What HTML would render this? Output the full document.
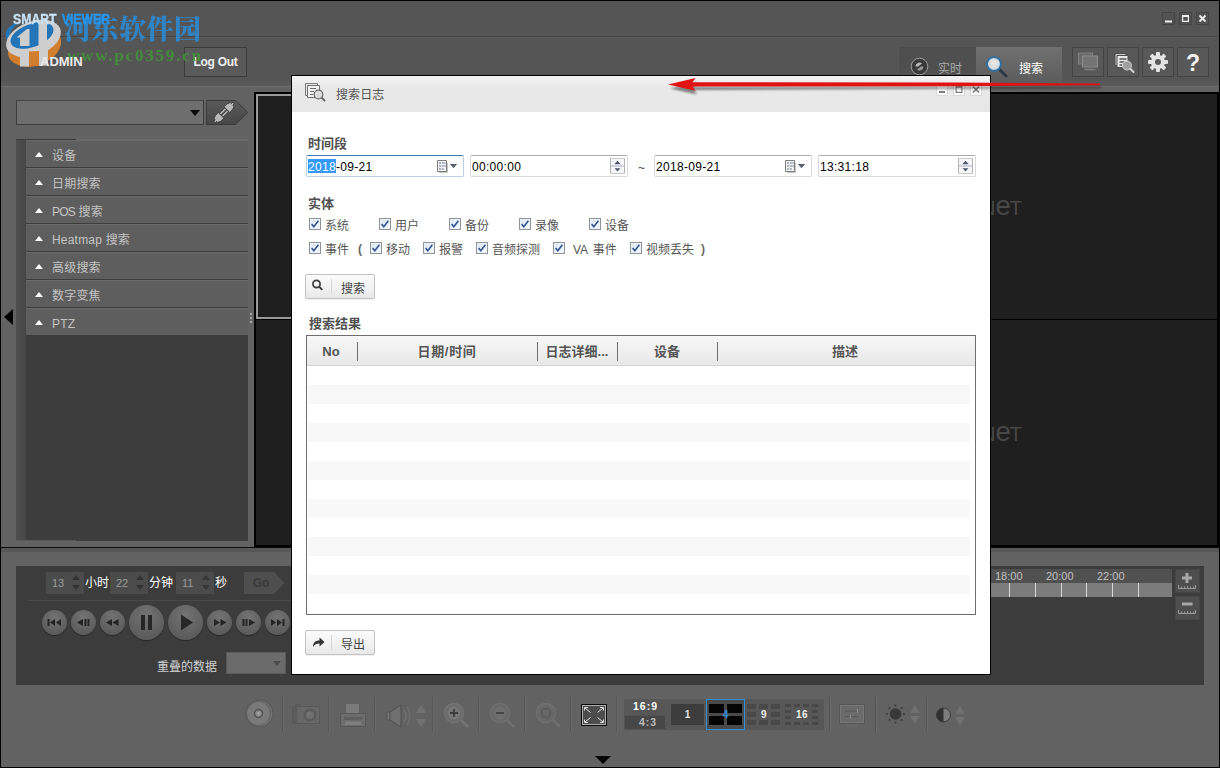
<!DOCTYPE html>
<html lang="zh-CN">
<head>
<meta charset="utf-8">
<title>Smart Viewer - 搜索日志</title>
<style>
*{box-sizing:border-box;margin:0;padding:0}
html,body{width:1220px;height:768px;overflow:hidden;background:#000}
body{position:relative;font-family:"Liberation Sans","Noto Sans CJK SC",sans-serif;font-size:12px;color:#ccc}
.abs,#app *{position:absolute}
#app{position:absolute;left:0;top:0;width:1220px;height:768px;background:#626262;overflow:hidden}
/* frame */
#frame{left:0;top:0;width:1220px;height:768px;border:1px solid #000;z-index:50;pointer-events:none}
/* header */
#hdr{left:1px;top:1px;width:1218px;height:85px;background:linear-gradient(180deg,#555 0,#555 78px,#5b5b5b 85px)}
#hdr .l1{left:0;top:35px;width:1218px;height:1px;background:#464646}
#hdr .l2{left:0;top:36px;width:1218px;height:1px;background:#5a5a5a}
#hline{left:1px;top:86px;width:1218px;height:1px;background:#6c6c6c}
#brand{left:13px;top:10px;font-weight:bold;font-size:14px;line-height:18px;color:#c9e2f6;white-space:nowrap;transform:scaleX(.875);transform-origin:0 0;word-spacing:2px;z-index:6;-webkit-text-stroke:.3px currentColor}
#brand b{position:static;color:#2696ee}
#admin{left:40px;top:55px;font-size:13px;line-height:14px;color:#ececec;font-weight:bold;white-space:nowrap;z-index:6}
#logout{left:184px;top:47px;width:63px;height:30px;border:1px solid #3b3b3b;background:#5a5a5a;color:#f0f0f0;font-weight:bold;font-size:12px;line-height:28px;text-align:center;letter-spacing:-.3px}
/* left panel */
#combo{left:16px;top:100px;width:188px;height:25px;background:#6e6e6e;border:1px solid #3e3e3e;border-top-color:#444}
#combo i{left:173px;top:9px;width:0;height:0;border:5px solid transparent;border-top:6px solid #0a0a0a;border-bottom:0}
#conn{left:206px;top:100px;width:43px;height:25px}
#acc{left:16px;top:139px;width:232px;height:402px;background:#3d3d3d}
#acc .gut{left:0;top:0;width:10px;height:402px;background:linear-gradient(90deg,#4f4f4f,#464646)}
#acc .topd{left:0;top:0;width:60px;height:1px;background:#3a3a3a}
#acc .topl{left:60px;top:0;width:172px;height:1px;background:#6a6a6a}
#acc .botl{left:0;top:401px;width:60px;height:1px;background:#585858}
.it{left:10px;width:222px;height:28px;background:#5e5e5e;border-top:1px solid #6a6a6a;border-bottom:1px solid #3c3c3c;color:#c4c4c4;font-size:12px;line-height:16px}
.it span{left:26px;top:7px;white-space:nowrap;letter-spacing:.2px}
.it i{left:9px;top:11px;width:0;height:0;border:4px solid transparent;border-bottom:5px solid #fff;border-top:0}
#larrow{left:4px;top:309px;width:0;height:0;border:8px solid transparent;border-right:9px solid #000;border-left:0}
#grip{left:250px;top:313px;width:2px;height:12px;background:repeating-linear-gradient(180deg,#aaa 0,#aaa 2px,transparent 2px,transparent 4px)}
/* video */
#vid{left:254px;top:92px;width:965px;height:456px;background:#000}
#vid .c{background:#1f1f1f;overflow:hidden}
#vid .c em{font-style:normal;color:#474747;font-size:20px;line-height:20px;letter-spacing:0;white-space:nowrap;font-weight:normal;height:24px;width:120px;text-align:right}
#app #vid .c em s{position:static;text-decoration:none;font-size:27.500px;line-height:20px;letter-spacing:-1px}
#sub{left:1px;top:547px;width:1218px;height:5px;background:#575757;border-top:1px solid #0c0c0c}
/* playback panel */
#pb{left:16px;top:566px;width:1188px;height:119px;background:#3c3c3c}
.sp{top:6px;width:38px;height:22px;background:#4b4b4b;color:#9c9c9c;font-size:11px;line-height:22px}
.sp span{left:6px;top:0}
.sp i{left:26px;width:0;height:0;border:4px solid transparent}
.sp i.u{top:3px;border-bottom:5px solid #343434;border-top:0}
.sp i.d{top:13px;border-top:5px solid #343434;border-bottom:0}
.un{top:9px;color:#fff;font-size:12px;line-height:16px;white-space:nowrap}
#go{left:228px;top:6px;width:41px;height:22px}
#pbl{left:12px;top:34px;width:263px;height:1px;background:#4a4a4a}
.mb{border-radius:50%;background:radial-gradient(circle at 50% 30%,#737373,#5d5d5d 70%,#545454);box-shadow:0 1px 1px rgba(0,0,0,.35)}
.mb svg{left:0;top:0;width:100%;height:100%}
#ovl{left:141px;top:94px;color:#d2d2d2;font-size:12px;line-height:14px;white-space:nowrap}
#ovc{left:210px;top:86px;width:60px;height:22px;background:#6b6b6b;border:1px solid #5a5a5a}
#ovc i{left:46px;top:8px;width:0;height:0;border:4px solid transparent;border-top:5px solid #4a4a4a;border-bottom:0}
#tlh{left:975px;top:3px;width:181px;height:14px;background:#505050;color:#c2c2c2;font-size:11px;line-height:14px}
#tlh span{top:0;white-space:nowrap}
#tlt{left:975px;top:17px;width:181px;height:14px;background:#7c7c7c}
#tlt i{top:0;width:1px;height:14px;background:#d8d8d8}
.zb{left:1159px;width:25px;height:24px;background:#4e4e4e;border:1px solid #464646}
/* bottom toolbar */
#tb{left:0;top:690px;width:1220px;height:50px}
#tb .s{top:7px;width:2px;height:34px;background:linear-gradient(90deg,#545454 0,#545454 50%,#6b6b6b 50%)}
#tb svg{overflow:visible}
#lay{left:624px;top:9px;width:200px;height:31px;background:#575757}
#lay .a{left:0;top:0;width:42px;height:16px;color:#fff;font-weight:bold;font-size:10.500px;line-height:15px;text-align:center;letter-spacing:1px;padding-left:1px}
#lay .b{left:0;top:16px;width:42px;height:15px;background:#474747;border:1px solid #535353;color:#bdbdbd;font-weight:bold;font-size:10.500px;line-height:12px;text-align:center;letter-spacing:1px;padding-left:6px}
#lay .n{font-weight:bold;font-size:10px;line-height:21px;text-align:center;color:#e6e6e6}
#lay .l1{left:47px;top:5px;width:33px;height:21px;background:#3d3d3d}
#lay .l4{left:82px;top:0;width:39px;height:31px;border:1px solid #2b8fdd;background:#4a4a4a}
#lay .l4 u{background:#050505;width:15px;height:9px}
#lay .l4 b{left:0;top:4px;width:37px;color:#2b8fdd;font-size:10px;line-height:21px;text-align:center}
#lay .g{top:5px;height:21px;width:34px}
#lay .g u{background:#484848}
#lay .g b{left:0;top:0;width:100%;line-height:21px;text-align:center;color:#eee;font-size:10px;letter-spacing:.5px}
#dn{left:595px;top:756px;width:0;height:0;border:8px solid transparent;border-top:8px solid #050505;border-bottom:0}
/* header right */
.wb{top:12px;width:13px;height:13px;background:#525252;border:1px solid #444}
.wb svg{left:-1px;top:-1px;width:13px;height:13px}
#tab1{left:899px;top:47px;width:77px;height:39px;background:linear-gradient(180deg,#4d4d4d,#505050 60%,#555)}
#tab1 span{left:39px;top:14px;color:#a9a9a9;font-size:12px;line-height:16px;white-space:nowrap}
#tab2{left:976px;top:47px;width:86px;height:39px;background:linear-gradient(180deg,#707070,#666 50%,#5a5a5a)}
#tab2 span{left:43px;top:14px;color:#fff;font-size:12px;line-height:16px;white-space:nowrap}
.hb{top:47px;width:32px;height:30px;background:#585858;border:1px solid #434343}
.hb svg{left:-1px;top:-1px;width:32px;height:30px}
/* watermark */
#wm1{left:64px;top:12px;font-family:"Noto Serif CJK SC","Liberation Serif",serif;font-weight:900;font-size:27px;line-height:32px;color:#2a8bd6;white-space:nowrap;letter-spacing:.5px;opacity:.88}
#wm2{left:67px;top:46px;font-family:"Liberation Serif","Noto Serif CJK SC",serif;font-weight:bold;font-size:17px;line-height:20px;color:#3f9a35;white-space:nowrap;letter-spacing:1.800px;opacity:.8}
#wmlogo{left:0;top:0;width:70px;height:75px}
/* dialog */
#dlg{left:291px;top:75px;width:700px;height:600px;background:#fff;border:1px solid #000;color:#444;z-index:20}
#dlg .tt{left:0;top:0;width:698px;height:36px;background:linear-gradient(180deg,#f3f3f3 0,#e9e9e9 30%,#e6e6e6 100%)}
#dlg .tt span{left:44px;top:11px;font-size:12px;line-height:16px;color:#555;white-space:nowrap;letter-spacing:.1px}
.db{top:8px;width:12px;height:12px;background:#fbfbfb;border:1px solid #d8d8d8}
.db svg{left:-1px;top:-1px;width:12px;height:12px}
.lbl{font-weight:bold;font-size:13px;line-height:16px;color:#505050;white-space:nowrap;margin-top:1px}
.in{top:79px;width:158px;height:22px;border:1px solid #dadada;border-top-color:#adadad;border-radius:2px;background:#fff;color:#000;font-size:12px;line-height:14px}
.in span{left:1px;top:4px;white-space:nowrap;letter-spacing:.3px}
.in .sel{left:1px;top:3px;width:28px;height:14px;background:#3399ff}
.in.f{border-color:#b7d3ea;border-top-color:#3d7bad}
#app .in mark{position:static;background:none;color:#fff}
.cb{width:12px;height:12px;border:1px solid #8f9399;background:linear-gradient(135deg,#dbe7f3,#f6fafd);box-shadow:inset 0 0 0 1px #eef3f8}
.cb svg{left:-1px;top:-1px;width:12px;height:12px}
.ct{font-size:12px;line-height:16px;color:#555;white-space:nowrap;margin-top:1px}
.btn{left:13px;width:70px;height:25px;border:1px solid #c2c2c2;border-radius:2px;background:linear-gradient(180deg,#fbfbfb,#f1f1f1 60%,#e8e8e8);box-shadow:0 1px 0 rgba(0,0,0,.05);color:#444;font-size:12px;line-height:16px}
.btn u{left:25px;top:4px;width:1px;height:15px;background:#d6d6d6}
.btn span{left:35px;top:6px;white-space:nowrap}
#tbl{left:14px;top:259px;width:670px;height:280px;border:1px solid #6f6f6f;background:#fff}
#tbl .st{left:1px;top:30px;width:662px;height:248px;background:repeating-linear-gradient(180deg,#fff 0,#fff 19px,#f8f8f8 19px,#f8f8f8 38px)}
#tbl .th{left:0;top:0;width:668px;height:30px;background:linear-gradient(180deg,#f7f7f7,#f0f0f0 50%,#e8e8e8);border-bottom:1px solid #d4d4d4}
#tbl .th i{top:6px;width:1px;height:19px;background:#6e6e6e}
#tbl .th span{top:8px;font-weight:bold;font-size:13px;line-height:16px;color:#555;white-space:nowrap;text-align:center}
/* red arrow */
#arrow{left:660px;top:70px;width:450px;height:30px;z-index:30;overflow:visible}
</style>
</head>
<body>
<div id="app">
  <div id="hdr"><div class="l1"></div><div class="l2"></div></div>
  <div id="hline"></div>
  <div id="brand">SMART <b>VIEWER</b></div>
  <div id="admin">ADMIN</div>
  <div id="logout">Log Out</div>
    <div id="combo"><i></i></div>
  <svg id="conn" viewBox="0 0 43 25"><defs><linearGradient id="gcn" x1="0" y1="0" x2="0" y2="1"><stop offset="0" stop-color="#5a5a5a"/><stop offset="1" stop-color="#474747"/></linearGradient></defs>
    <path d="M.5 .5H29.5L41.8 12.5 29.5 24.5H.5Z" fill="url(#gcn)" stroke="#3a3a3a"/>
    <g transform="rotate(-45 18 12.5)" fill="#b8b8b8" stroke="#2e2e2e" stroke-width=".8">
      <path d="M4.5 11.5h2v-1.6l3-1.4h4.5v8h-4.5l-3-1.4v-1.6h-2z"/>
      <path d="M31.5 11.5h-2v-1.6l-3-1.4H22v8h4.5l3-1.4v-1.6h2z"/>
      <path d="M14.5 11h7M14.5 14h7" stroke="#d8d8d8" stroke-width="1" fill="none"/>
    </g>
  </svg>
  <div id="acc"><div class="gut"></div><div class="topd"></div><div class="topl"></div><div class="botl"></div>
    <div class="it" style="top:1px"><i></i><span>设备</span></div>
    <div class="it" style="top:29px"><i></i><span>日期搜索</span></div>
    <div class="it" style="top:57px"><i></i><span style="letter-spacing:-.8px;word-spacing:1px">POS <b style="position:static;font-weight:normal;letter-spacing:.2px">搜索</b></span></div>
    <div class="it" style="top:85px"><i></i><span>Heatmap 搜索</span></div>
    <div class="it" style="top:113px"><i></i><span>高级搜索</span></div>
    <div class="it" style="top:141px"><i></i><span>数字变焦</span></div>
    <div class="it" style="top:169px"><i></i><span>PTZ</span></div>
  </div>
  <div id="larrow"></div>
  <div id="grip"></div>
  <div id="vid">
    <div class="c" style="left:2px;top:2px;width:480px;height:225px;border:2px solid #9a9a9a"></div>
    <div class="c" style="left:483px;top:2px;width:480px;height:225px"><em style="left:165px;top:102px">WIS<s>e</s>N<s>e</s>T</em></div>
    <div class="c" style="left:2px;top:228px;width:480px;height:225px"></div>
    <div class="c" style="left:483px;top:228px;width:480px;height:225px"><em style="left:165px;top:102px">WIS<s>e</s>N<s>e</s>T</em></div>
  </div>
  <div id="sub"></div>
  <div id="pb">
    <div class="sp" style="left:30px"><span>13</span><i class="u"></i><i class="d"></i></div>
    <div class="un" style="left:69px">小时</div>
    <div class="sp" style="left:94px"><span>22</span><i class="u"></i><i class="d"></i></div>
    <div class="un" style="left:133px">分钟</div>
    <div class="sp" style="left:160px"><span>11</span><i class="u"></i><i class="d"></i></div>
    <div class="un" style="left:199px">秒</div>
    <svg id="go" viewBox="0 0 41 22"><path d="M0 0H30L40.5 11 30 22H0Z" fill="#4e4e4e"/><text x="17" y="15" text-anchor="middle" font-family="Liberation Sans, sans-serif" font-weight="bold" font-size="12" fill="#383838">Go</text></svg>
    <div id="pbl"></div>
    <div class="mb" style="left:26px;top:44px;width:25px;height:25px"><svg viewBox="0 0 25 25"><path d="M5.5 9h2v7h-2zM13 9v7l-5-3.5zM19 9v7l-5-3.5z" fill="#242424"/></svg></div>
    <div class="mb" style="left:55px;top:44px;width:25px;height:25px"><svg viewBox="0 0 25 25"><path d="M12 9v7l-6-3.5zM13.5 9h2v7h-2zM16.5 9h2v7h-2z" fill="#242424"/></svg></div>
    <div class="mb" style="left:84px;top:44px;width:25px;height:25px"><svg viewBox="0 0 25 25"><path d="M12 9v7l-6-3.5zM18.500 9v7l-6-3.5z" fill="#242424"/></svg></div>
    <div class="mb" style="left:113px;top:39px;width:35px;height:35px"><svg viewBox="0 0 35 35"><path d="M12 10h4v15h-4zM19 10h4v15h-4z" fill="#262626"/></svg></div>
    <div class="mb" style="left:152px;top:39px;width:35px;height:35px"><svg viewBox="0 0 35 35"><path d="M13 9.500v16l12-8z" fill="#262626"/></svg></div>
    <div class="mb" style="left:191px;top:44px;width:25px;height:25px"><svg viewBox="0 0 25 25"><path d="M7 9v7l6-3.5zM13.500 9v7l6-3.500z" fill="#242424"/></svg></div>
    <div class="mb" style="left:220px;top:44px;width:25px;height:25px"><svg viewBox="0 0 25 25"><path d="M6.500 9h2v7h-2zM9.500 9h2v7h-2zM13 9v7l6-3.500z" fill="#242424"/></svg></div>
    <div class="mb" style="left:249px;top:44px;width:25px;height:25px"><svg viewBox="0 0 25 25"><path d="M6 9v7l5-3.500zM12 9v7l5-3.500zM17.500 9h2v7h-2z" fill="#242424"/></svg></div>
    <div id="ovl">重叠的数据</div>
    <div id="ovc"><i></i></div>
    <div id="tlh"><span style="left:4px">18:00</span><span style="left:55px">20:00</span><span style="left:106px">22:00</span></div>
    <div id="tlt"><i style="left:18px"></i><i style="left:44px"></i><i style="left:70px"></i><i style="left:95px"></i><i style="left:121px"></i><i style="left:147px"></i></div>
    <div class="zb" style="top:3px"><svg viewBox="0 0 25 24" style="left:-1px;top:-1px;width:25px;height:24px"><path d="M10.500 4h3v3.500h3.500v3h-3.500v3.500h-3v-3.500H7v-3h3.500z" fill="#a8a8a8"/><path d="M3.500 16v3.500h17V16M6.500 17.500v2M9.500 17.500v2M12.500 17v2.500M15.500 17.500v2M18.500 17.500v2" stroke="#9a9a9a" fill="none"/></svg></div>
    <div class="zb" style="top:30px"><svg viewBox="0 0 25 24" style="left:-1px;top:-1px;width:25px;height:24px"><path d="M7 6.500h10.500v3H7z" fill="#a8a8a8"/><path d="M3.500 14v3.500h17V14M6.500 15.500v2M9.500 15.500v2M12.500 15v2.500M15.500 15.500v2M18.500 15.500v2" stroke="#9a9a9a" fill="none"/></svg></div>
  </div>
  <div id="tb">
    <svg style="left:245px;top:9px;width:29px;height:29px" viewBox="0 0 29 29"><circle cx="14.500" cy="14.500" r="13.500" fill="#727272" stroke="#555"/><circle cx="13.500" cy="14.500" r="12" fill="#7a7a7a" stroke="#5a5a5a" stroke-width=".8"/><circle cx="13.500" cy="14.500" r="4" fill="#8a8a8a" stroke="#505050" stroke-width="1.500"/><circle cx="13.500" cy="14.500" r="1.300" fill="#aaa"/></svg>
    <div class="s" style="left:282px"></div>
    <svg style="left:292px;top:13px;width:29px;height:22px" viewBox="0 0 29 22"><path d="M3 1h6v2H3z" fill="#5a5a5a"/><path d="M.5 3.500h27v17H.5z" fill="#676767" stroke="#585858"/><path d="M1 4h4.500v16H1z" fill="#5b5b5b"/><circle cx="18" cy="12" r="6.500" fill="#5a5a5a"/><circle cx="18" cy="12" r="4" fill="#6e6e6e"/><circle cx="17" cy="11" r="1.500" fill="#787878"/></svg>
    <div class="s" style="left:328px"></div>
    <svg style="left:339px;top:13px;width:28px;height:25px" viewBox="0 0 28 25"><path d="M7 1h13v9H7z" fill="#7b7b7b"/><path d="M1.500 10.500h25v13h-25z" fill="#6c6c6c" stroke="#585858"/><path d="M5 14h18v3H5z" fill="#5e5e5e"/><path d="M6 18.500h16v3.500H6z" fill="#7e7e7e"/></svg>
    <div class="s" style="left:374px"></div>
    <svg style="left:386px;top:14px;width:42px;height:24px" viewBox="0 0 42 24"><path d="M1 8h3v8H1z" fill="#7a7a7a" stroke="#4e4e4e"/><path d="M4 8L15 1v22L4 16z" fill="#707070" stroke="#4e4e4e"/><path d="M18 6q4 6 0 12M21 3q6 9 0 18" fill="none" stroke="#6e6e6e" stroke-width="1.500"/><path d="M35 1l5 8H30zM35 23l5-8H30z" fill="#737373"/></svg>
    <div class="s" style="left:432px"></div>
    <svg style="left:443px;top:12px;width:27px;height:27px" viewBox="0 0 27 27"><circle cx="11" cy="11" r="9.500" fill="#6c6c6c" stroke="#737373" stroke-width="1.500"/><circle cx="11" cy="11" r="6.500" fill="#777"/><path d="M7 11h8M11 7v8" stroke="#3c3c3c" stroke-width="1.800"/><path d="M18 18l7 7" stroke="#747474" stroke-width="2.500"/></svg>
    <div class="s" style="left:478px"></div>
    <svg style="left:489px;top:12px;width:27px;height:27px" viewBox="0 0 27 27"><circle cx="11" cy="11" r="9.500" fill="#686868" stroke="#707070" stroke-width="1.500"/><circle cx="11" cy="11" r="6.500" fill="#6f6f6f"/><path d="M7 11h8" stroke="#454545" stroke-width="2"/><path d="M18 18l7 7" stroke="#707070" stroke-width="2.500"/></svg>
    <div class="s" style="left:524px"></div>
    <svg style="left:535px;top:12px;width:27px;height:27px" viewBox="0 0 27 27"><circle cx="11" cy="11" r="9.500" fill="#686868" stroke="#707070" stroke-width="1.500"/><circle cx="11" cy="11" r="4.500" fill="none" stroke="#5c5c5c" stroke-width="2"/><path d="M18 18l7 7" stroke="#707070" stroke-width="2.500"/></svg>
    <div class="s" style="left:570px"></div>
    <svg style="left:581px;top:14px;width:26px;height:22px" viewBox="0 0 26 22"><rect x=".5" y=".5" width="25" height="21" fill="#4c4c4c" stroke="#0a0a0a"/><rect x="1.500" y="1.500" width="23" height="19" fill="none" stroke="#b8b8b8" stroke-width=".9"/><path d="M4 4l5.500 4.500M22 4l-5.500 4.500M4 18l5.500-4.500M22 18l-5.500-4.500" fill="none" stroke="#e4e4e4" stroke-width="1"/><path d="M3.500 6.500v-3h3.500M19 3.500h3.500v3M3.500 15.500v3h3.500M19 18.500h3.500v-3" fill="none" stroke="#dcdcdc" stroke-width="1"/></svg>
    <div class="s" style="left:616px"></div>
    <div id="lay">
      <div class="a">16:9</div><div class="b">4:3</div>
      <div class="l1 n">1</div>
      <div class="l4"><u style="left:2px;top:4px"></u><u style="left:20px;top:4px"></u><u style="left:2px;top:16px"></u><u style="left:20px;top:16px"></u><b>4</b></div>
      <div class="g" style="left:123px"><u style="left:0;top:0;width:9px;height:5px"></u><u style="left:12px;top:0;width:9px;height:5px"></u><u style="left:24px;top:0;width:9px;height:5px"></u><u style="left:0;top:8px;width:9px;height:5px"></u><u style="left:24px;top:8px;width:9px;height:5px"></u><u style="left:0;top:16px;width:9px;height:5px"></u><u style="left:12px;top:16px;width:9px;height:5px"></u><u style="left:24px;top:16px;width:9px;height:5px"></u><b>9</b></div>
      <div class="g" style="left:161px"><u style="left:0;top:0;width:6px;height:3px"></u><u style="left:9px;top:0;width:6px;height:3px"></u><u style="left:18px;top:0;width:6px;height:3px"></u><u style="left:27px;top:0;width:6px;height:3px"></u><u style="left:0;top:6px;width:6px;height:3px"></u><u style="left:27px;top:6px;width:6px;height:3px"></u><u style="left:0;top:12px;width:6px;height:3px"></u><u style="left:27px;top:12px;width:6px;height:3px"></u><u style="left:0;top:18px;width:6px;height:3px"></u><u style="left:9px;top:18px;width:6px;height:3px"></u><u style="left:18px;top:18px;width:6px;height:3px"></u><u style="left:27px;top:18px;width:6px;height:3px"></u><b>16</b></div>
    </div>
    <div class="s" style="left:829px"></div>
    <svg style="left:839px;top:14px;width:27px;height:24px" viewBox="0 0 27 24"><rect x=".5" y=".5" width="25" height="19" fill="#6a6a6a" stroke="#565656"/><rect x="1.500" y="1.500" width="23" height="17" fill="none" stroke="#777"/><path d="M6 7h14M6 12.500h14" stroke="#5b5b5b"/><path d="M18.500 5v4M11.500 10.500v4" stroke="#8c8c8c"/><path d="M7 22h12" stroke="#6e6e6e"/></svg>
    <div class="s" style="left:875px"></div>
    <svg style="left:885px;top:13px;width:37px;height:24px" viewBox="0 0 37 24"><circle cx="10.500" cy="11" r="5.800" fill="#383838"/><g fill="#3c3c3c"><circle cx="10.500" cy="2.500" r="1.100"/><circle cx="10.500" cy="19.500" r="1.100"/><circle cx="2" cy="11" r="1.100"/><circle cx="19" cy="11" r="1.100"/><circle cx="4.500" cy="5" r="1.100"/><circle cx="16.500" cy="5" r="1.100"/><circle cx="4.500" cy="17" r="1.100"/><circle cx="16.500" cy="17" r="1.100"/></g><path d="M30 2l5 8H25zM30 21l5-8H25z" fill="#727272"/></svg>
    <div class="s" style="left:926px"></div>
    <svg style="left:935px;top:14px;width:32px;height:24px" viewBox="0 0 32 24"><circle cx="8.500" cy="11" r="7" fill="#7c7c7c" stroke="#3a3a3a"/><path d="M8.500 4a7 7 0 0 0 0 14z" fill="#303030"/><path d="M25 2l5 8H20zM25 21l5-8H20z" fill="#727272"/></svg>
  </div>
  <div id="dn"></div>
  <svg id="wmlogo" viewBox="0 0 70 75"><g opacity=".92"><path d="M7 40C3 30 10 24 22 21 12 27 8 33 9.500 42Z" fill="#1f78c0"/><ellipse cx="34.500" cy="47" rx="27.500" ry="18.500" transform="rotate(-20 34.500 47)" fill="#dc832b"/><ellipse cx="33.500" cy="38.500" rx="28.500" ry="17" transform="rotate(-20 33.500 38.500)" fill="#d9d9d9"/><ellipse cx="32" cy="35.500" rx="22.500" ry="11.500" transform="rotate(-20 32 35.500)" fill="#1f78c0"/><path d="M38.500 22.500L47 20.500V50L38.500 53Z" fill="#d9d9d9"/><path d="M16.500 37.500L27 29h2.500v17h-9.500v-8.500Z" fill="#d9d9d9"/><path d="M20 53l9-2v15.500h-9zM39 51l9-3v17.500l-9 .5z" fill="#d9d9d9"/><path d="M29 51.500l10-.5v15h-10z" fill="#dc832b"/></g></svg>
  <div id="wm1">河东软件园</div>
  <div id="wm2">www.pc0359.cn</div>
  <div class="wb" style="left:1162px"><svg viewBox="0 0 13 13"><path d="M3 8.500h7v2H3z" fill="#f0f0f0"/></svg></div>
  <div class="wb" style="left:1179px"><svg viewBox="0 0 13 13"><path d="M3 3h7v7H3zM4.200 5h4.600v3.800H4.200z" fill="#f0f0f0" fill-rule="evenodd"/></svg></div>
  <div class="wb" style="left:1196px"><svg viewBox="0 0 13 13"><path d="M3.500 3.500l6 6M9.500 3.500l-6 6" stroke="#f0f0f0" stroke-width="1.800"/></svg></div>
  <div id="tab1"><svg style="left:11px;top:10px;width:19px;height:19px" viewBox="0 0 19 19"><circle cx="9.500" cy="9.500" r="8.300" fill="#3a3a3a" stroke="#a0a0a0" stroke-width="1"/><path d="M5.500 9.500a4 4 0 0 1 6.500-3.100l-4 3.100z" fill="#b9b9b9"/><path d="M13.500 9.500a4 4 0 0 1-6.500 3.100l4-3.100z" fill="#9a9a9a"/></svg><span>实时</span></div>
  <div id="tab2"><svg style="left:9px;top:8px;width:24px;height:24px" viewBox="0 0 24 24"><defs><radialGradient id="lens" cx=".5" cy=".45" r=".6"><stop offset="0" stop-color="#f3e6dc"/><stop offset=".6" stop-color="#d6dde3"/><stop offset="1" stop-color="#9fb6c8"/></radialGradient></defs><path d="M14 14l7 7" stroke="#2c3742" stroke-width="3" stroke-linecap="round"/><circle cx="9" cy="9" r="7" fill="url(#lens)" stroke="#35709f" stroke-width="2"/></svg><span>搜索</span></div>
  <div class="hb" style="left:1072px"><svg viewBox="0.5 0 32 30"><path d="M7 6h14v11H7z" fill="#6a6a6a" stroke="#808080"/><path d="M11 9h15v11H11z" fill="#747474" stroke="#8c8c8c"/><path d="M13 22.500h11" stroke="#808080" stroke-width="1.500"/></svg></div>
  <div class="hb" style="left:1107px"><svg viewBox="0.5 0 32 30"><path d="M8.500 6.500h11v12h-11z" fill="#cfcfcf" stroke="#4a4a4a"/><path d="M10.500 8.500h11v12h-11z" fill="#e8e8e8" stroke="#4a4a4a"/><path d="M13 12h7M13 15h5M13 18h3" stroke="#555" stroke-width="1.300"/><circle cx="20.500" cy="18.500" r="4.500" fill="#9f9f9f" stroke="#d0d0d0"/><path d="M24 22l3 3" stroke="#d8d8d8" stroke-width="2" stroke-linecap="round"/></svg></div>
  <div class="hb" style="left:1142px"><svg viewBox="0.5 0 32 30"><g transform="translate(16.500 15)"><g fill="#e4e4e4"><circle r="7"/><rect x="-2" y="-10" width="4" height="20" rx="1"/><rect x="-2" y="-10" width="4" height="20" rx="1" transform="rotate(45)"/><rect x="-2" y="-10" width="4" height="20" rx="1" transform="rotate(90)"/><rect x="-2" y="-10" width="4" height="20" rx="1" transform="rotate(135)"/></g><circle r="3" fill="#595959"/></g></svg></div>
  <div class="hb" style="left:1177px"><svg viewBox="0.5 0 32 30"><text x="16.500" y="23.500" text-anchor="middle" font-family="Liberation Sans, sans-serif" font-weight="bold" font-size="23" fill="#f0f0f0">?</text></svg></div>
  <div id="dlg">
    <div class="tt">
      <svg style="left:12px;top:6px;width:24px;height:22px" viewBox="0 0 24 22"><path d="M1.500 1.500h12v12h-12z" fill="#e9e9e9" stroke="#7c7c7c"/><path d="M3.500 3.500h12v12h-12z" fill="#f3f3f3" stroke="#707070"/><path d="M6 6.500h6M6 9.500h4M6 12.500h3.500" stroke="#6a6a6a" stroke-width="1.200"/><circle cx="14.500" cy="12.500" r="4.300" fill="#dedede" stroke="#6c6c6c" stroke-width="1.200"/><path d="M17.800 15.800l2.700 2.700" stroke="#6c6c6c" stroke-width="2" stroke-linecap="round"/></svg>
      <span>搜索日志</span>
      <div class="db" style="left:644px"><svg viewBox="0 0 12 12"><path d="M3 7h6v2H3z" fill="#808080"/></svg></div>
      <div class="db" style="left:661px"><svg viewBox="0 0 12 12"><path d="M2.500 2h7v7h-7zM3.700 3.800h4.600v4H3.700z" fill="#808080" fill-rule="evenodd"/></svg></div>
      <div class="db" style="left:678px"><svg viewBox="0 0 12 12"><path d="M3 2.500l6 6M9 2.500L3 8.500" stroke="#787878" stroke-width="1.700"/></svg></div>
    </div>
    <div class="lbl" style="left:16px;top:59px">时间段</div>
    <div class="in f" style="left:14px"><div class="sel"></div><span><mark>2018</mark>-09-21</span>
      <svg style="left:129px;top:3px;width:24px;height:15px" viewBox="0 0 24 15"><path d="M3 13.500h8.500V4" fill="none" stroke="#c4c4c4"/><path d="M1.500 1.500h9v11h-9z" fill="#f4f4f4" stroke="#7d7d7d"/><path d="M3 3h2v2H3zM5.800 3h2v2h-2zM8.300 3h1.500v2H8.300zM3 6h2v2H3zM5.800 6h2v2h-2zM8.300 6h1.500v2H8.300zM3 9h2v2H3zM5.800 9h2v2h-2z" fill="#aab3bf"/><path d="M13.800 5h7.400l-3.700 4.300z" fill="#586172"/></svg></div>
    <div class="in" style="left:178px"><span>00:00:00</span>
      <svg style="left:139px;top:2px;width:15px;height:16px" viewBox="0 0 15 16"><rect x=".5" y=".5" width="14" height="15" fill="#f6f6f9" stroke="#c9c9cd"/><path d="M.5 1v14M14.500 1v14" stroke="#b4b4b8"/><path d="M1 8h13" stroke="#a9adc4"/><path d="M7.500 2.800l3.200 3.400H4.300zM7.500 13.400l3-3.200h-6z" fill="#4f566c"/></svg></div>
    <div class="ct" style="left:346px;top:83px;color:#444">~</div>
    <div class="in" style="left:362px"><span>2018-09-21</span>
      <svg style="left:129px;top:3px;width:24px;height:15px" viewBox="0 0 24 15"><path d="M3 13.500h8.500V4" fill="none" stroke="#c4c4c4"/><path d="M1.500 1.500h9v11h-9z" fill="#f4f4f4" stroke="#7d7d7d"/><path d="M3 3h2v2H3zM5.800 3h2v2h-2zM8.300 3h1.500v2H8.300zM3 6h2v2H3zM5.800 6h2v2h-2zM8.300 6h1.500v2H8.300zM3 9h2v2H3zM5.800 9h2v2h-2z" fill="#aab3bf"/><path d="M13.800 5h7.400l-3.700 4.300z" fill="#586172"/></svg></div>
    <div class="in" style="left:526px"><span>13:31:18</span>
      <svg style="left:139px;top:2px;width:15px;height:16px" viewBox="0 0 15 16"><rect x=".5" y=".5" width="14" height="15" fill="#f6f6f9" stroke="#c9c9cd"/><path d="M.5 1v14M14.500 1v14" stroke="#b4b4b8"/><path d="M1 8h13" stroke="#a9adc4"/><path d="M7.500 2.800l3.200 3.400H4.300zM7.500 13.400l3-3.200h-6z" fill="#4f566c"/></svg></div>
    <div class="lbl" style="left:16px;top:119px">实体</div>
    <div class="cb" style="left:17px;top:142px"><svg viewBox="0 0 12 12"><path d="M2.600 6l2.200 2.700L9.400 2.800" fill="none" stroke="#2c4f94" stroke-width="1.500"/></svg></div>
    <div class="ct" style="left:33px;top:141px">系统</div>
    <div class="cb" style="left:87px;top:142px"><svg viewBox="0 0 12 12"><path d="M2.600 6l2.200 2.700L9.400 2.800" fill="none" stroke="#2c4f94" stroke-width="1.500"/></svg></div>
    <div class="ct" style="left:103px;top:141px">用户</div>
    <div class="cb" style="left:157px;top:142px"><svg viewBox="0 0 12 12"><path d="M2.600 6l2.200 2.700L9.400 2.800" fill="none" stroke="#2c4f94" stroke-width="1.500"/></svg></div>
    <div class="ct" style="left:173px;top:141px">备份</div>
    <div class="cb" style="left:227px;top:142px"><svg viewBox="0 0 12 12"><path d="M2.600 6l2.200 2.700L9.400 2.800" fill="none" stroke="#2c4f94" stroke-width="1.500"/></svg></div>
    <div class="ct" style="left:243px;top:141px">录像</div>
    <div class="cb" style="left:297px;top:142px"><svg viewBox="0 0 12 12"><path d="M2.600 6l2.200 2.700L9.400 2.800" fill="none" stroke="#2c4f94" stroke-width="1.500"/></svg></div>
    <div class="ct" style="left:313px;top:141px">设备</div>
    <div class="cb" style="left:17px;top:166px"><svg viewBox="0 0 12 12"><path d="M2.600 6l2.200 2.700L9.400 2.800" fill="none" stroke="#2c4f94" stroke-width="1.500"/></svg></div>
    <div class="ct" style="left:33px;top:165px">事件</div>
    <div class="cb" style="left:78px;top:166px"><svg viewBox="0 0 12 12"><path d="M2.600 6l2.200 2.700L9.400 2.800" fill="none" stroke="#2c4f94" stroke-width="1.500"/></svg></div>
    <div class="ct" style="left:94px;top:165px">移动</div>
    <div class="cb" style="left:131px;top:166px"><svg viewBox="0 0 12 12"><path d="M2.600 6l2.200 2.700L9.400 2.800" fill="none" stroke="#2c4f94" stroke-width="1.500"/></svg></div>
    <div class="ct" style="left:147px;top:165px">报警</div>
    <div class="cb" style="left:184px;top:166px"><svg viewBox="0 0 12 12"><path d="M2.600 6l2.200 2.700L9.400 2.800" fill="none" stroke="#2c4f94" stroke-width="1.500"/></svg></div>
    <div class="ct" style="left:200px;top:165px">音频探测</div>
    <div class="cb" style="left:261px;top:166px"><svg viewBox="0 0 12 12"><path d="M2.600 6l2.200 2.700L9.400 2.800" fill="none" stroke="#2c4f94" stroke-width="1.500"/></svg></div>
    <div class="ct" style="left:281px;top:165px;word-spacing:2px">VA 事件</div>
    <div class="cb" style="left:338px;top:166px"><svg viewBox="0 0 12 12"><path d="M2.600 6l2.200 2.700L9.400 2.800" fill="none" stroke="#2c4f94" stroke-width="1.500"/></svg></div>
    <div class="ct" style="left:354px;top:165px">视频丢失</div>
    <div class="ct" style="left:66px;top:164px;font-weight:bold;color:#666">(</div>
    <div class="ct" style="left:409px;top:164px;font-weight:bold;color:#666">)</div>
    <div class="btn" style="top:198px"><svg style="left:4px;top:3px;width:15px;height:14px" viewBox="0 0 15 14"><circle cx="6.500" cy="6" r="3.600" fill="none" stroke="#3a3a3a" stroke-width="1.700"/><path d="M9.500 9l2.800 2.800" stroke="#3a3a3a" stroke-width="1.800"/></svg><u></u><span>搜索</span></div>
    <div class="lbl" style="left:17px;top:239px">搜索结果</div>
    <div id="tbl"><div class="st"></div><div class="th">
      <i style="left:50px"></i><i style="left:230px"></i><i style="left:310px"></i><i style="left:410px"></i>
      <span style="left:0;width:48px">No</span><span style="left:51px;width:178px;letter-spacing:.7px">日期/时间</span><span style="left:231px;width:78px">日志详细...</span><span style="left:311px;width:98px">设备</span><span style="left:411px;width:254px">描述</span>
    </div></div>
    <div class="btn" style="top:554px"><svg style="left:5px;top:4px;width:15px;height:14px" viewBox="0 0 15 14"><path d="M2 12c0-4.500 2.500-6.500 6.500-6.500V2.500l5 4.500-5 4.500V8.500C5.500 8.500 3.500 9.500 2 12z" fill="#333"/></svg><u></u><span>导出</span></div>
  </div>
  <svg id="arrow" viewBox="0 0 450 30"><defs><filter id="ash" x="-5%" y="-50%" width="110%" height="200%"><feGaussianBlur stdDeviation="1.200"/></filter></defs>
    <path d="M9 16.500L36 10.500 33 15 440 14.800 440 16 33 18 36 22.500Z" fill="#000" opacity=".45" filter="url(#ash)" transform="translate(1 2)"/>
    <path d="M8 14.500L35.500 8 32.500 12.300 300 12.500 440 13.500 440 15.200 300 16.200 32.500 16.500 35.500 20.800Z" fill="#e01212"/>
  </svg>
<!--SECTIONS-->
  <div id="frame"></div>
</div>
</body>
</html>
